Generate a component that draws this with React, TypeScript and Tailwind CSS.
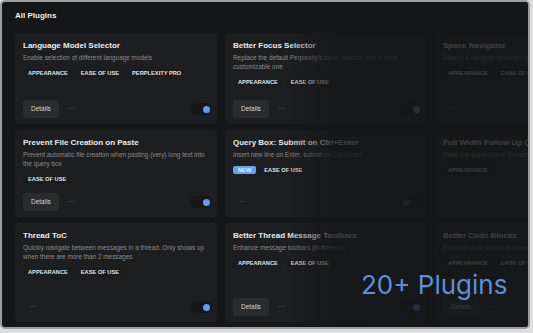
import React from "react";

type Plugin = {
  title: string;
  desc: string;
  tags: string[];
  isNew?: boolean;
  details?: boolean;
  toggle?: "on" | "off";
};

// grid is filled row by row: 3 columns x 3 rows
const plugins: Plugin[] = [
  {
    title: "Language Model Selector",
    desc: "Enable selection of different language models",
    tags: ["APPEARANCE", "EASE OF USE", "PERPLEXITY PRO"],
    details: true,
    toggle: "on",
  },
  {
    title: "Better Focus Selector",
    desc: "Replace the default Perplexity's focus selector with a more customizable one",
    tags: ["APPEARANCE", "EASE OF USE"],
    details: true,
    toggle: "on",
  },
  {
    title: "Space Navigator",
    desc: "Search & navigate between spaces with ease",
    tags: ["APPEARANCE", "EASE OF USE"],
  },
  {
    title: "Prevent File Creation on Paste",
    desc: "Prevent automatic file creation when pasting (very) long text into the query box",
    tags: ["EASE OF USE"],
    details: true,
    toggle: "on",
  },
  {
    title: "Query Box: Submit on Ctrl+Enter",
    desc: "Insert new line on Enter, submit on Ctrl+Enter",
    tags: ["EASE OF USE"],
    isNew: true,
    toggle: "off",
  },
  {
    title: "Full Width Follow Up Query",
    desc: "Make the query box in threads full width",
    tags: ["APPEARANCE"],
  },
  {
    title: "Thread ToC",
    desc: "Quickly navigate between messages in a thread. Only shows up when there are more than 2 messages",
    tags: ["APPEARANCE", "EASE OF USE"],
    toggle: "on",
  },
  {
    title: "Better Thread Message Toolbars",
    desc: "Enhance message toolbars (in threads)",
    tags: ["APPEARANCE", "EASE OF USE"],
    details: true,
    toggle: "on",
  },
  {
    title: "Better Code Blocks",
    desc: "Enhance code blocks in threads",
    tags: ["APPEARANCE", "EASE OF USE"],
    details: true,
  },
];

function Toggle({ on }: { on: boolean }) {
  return (
    <span
      className={`ml-auto flex h-[12px] w-[22px] items-center rounded-full bg-[#161718] px-[2.5px] ${
        on ? "justify-end" : "justify-start"
      }`}
    >
      <span
        className={`h-[7px] w-[7px] rounded-full ${
          on ? "bg-[#5d9df4]" : "bg-[#4a4b4c]"
        }`}
      />
    </span>
  );
}

function PluginCard({ p }: { p: Plugin }) {
  return (
    <div className="flex flex-col rounded-[4px] bg-[#1d1e1f] pb-[6px] pl-[8px] pr-[5px] pt-[8px]">
      <h2 className="whitespace-nowrap text-[8px] font-bold leading-[10px] text-[#ececec]">
        {p.title}
      </h2>
      <p className="mt-[1.5px] pr-[3px] text-[6.4px] leading-[9px] text-[#8a8b8c]">
        {p.desc}
      </p>
      <div className="mt-[7.5px] flex gap-[3px]">
        {p.isNew && (
          <span className="h-[8px] rounded-[2px] bg-[#63a2f6] px-[5px] text-[5.7px] font-bold leading-[8px] text-[#e8f1fd]">
            NEW
          </span>
        )}
        {p.tags.map((t) => (
          <span
            key={t}
            className="h-[8px] whitespace-nowrap rounded-[2px] bg-[#1b1c1d] px-[5px] text-[5.7px] font-bold leading-[8px] text-[#e2e2e2]"
          >
            {t}
          </span>
        ))}
      </div>
      <div className="mt-auto flex h-[18px] items-center">
        {p.details && (
          <button className="mr-[3px] h-[18px] rounded-[3px] bg-[#2a2b2c] px-[8px] text-[6.5px] leading-[18px] text-[#d6d6d6]">
            Details
          </button>
        )}
        <span className="px-[6px] text-[7px] leading-[18px] text-[#6e6f70]">···</span>
        {p.toggle && <Toggle on={p.toggle === "on"} />}
      </div>
    </div>
  );
}

export default function App() {
  return (
    <div
      className="h-[333px] w-[533px] bg-[#dedede] pb-[4px] pr-[3px]"
      style={{ fontFamily: '"Liberation Sans", Arial, sans-serif' }}
    >
      <div className="relative h-[329px] w-[530px] overflow-hidden rounded-[5px] border-2 border-[#9d9d9d] bg-[#151617]">
        <div className="pl-[13px] pt-[9px]">
          <h1 className="text-[8px] font-bold leading-[10px] text-[#f0f0f0]">All Plugins</h1>
          <div className="mt-[12px] grid w-max grid-cols-[202px_202px_202px] grid-rows-[91px_87px_99px] gap-x-[8px] gap-y-[6px]">
            {plugins.map((p) => (
              <PluginCard key={p.title} p={p} />
            ))}
          </div>
        </div>

        {/* fade to the right */}
        <div className="pointer-events-none absolute inset-0 bg-[linear-gradient(to_right,transparent_54%,rgba(21,22,23,0.8)_63%,rgba(21,22,23,0.82)_100%)]" />

        <div
          className="pointer-events-none absolute left-[359px] top-[270px] whitespace-nowrap text-[26px] leading-[26px] text-[#5890db]"
          style={{ fontFamily: "Inter, sans-serif" }}
        >
          20+ Plugins
        </div>
      </div>
    </div>
  );
}
